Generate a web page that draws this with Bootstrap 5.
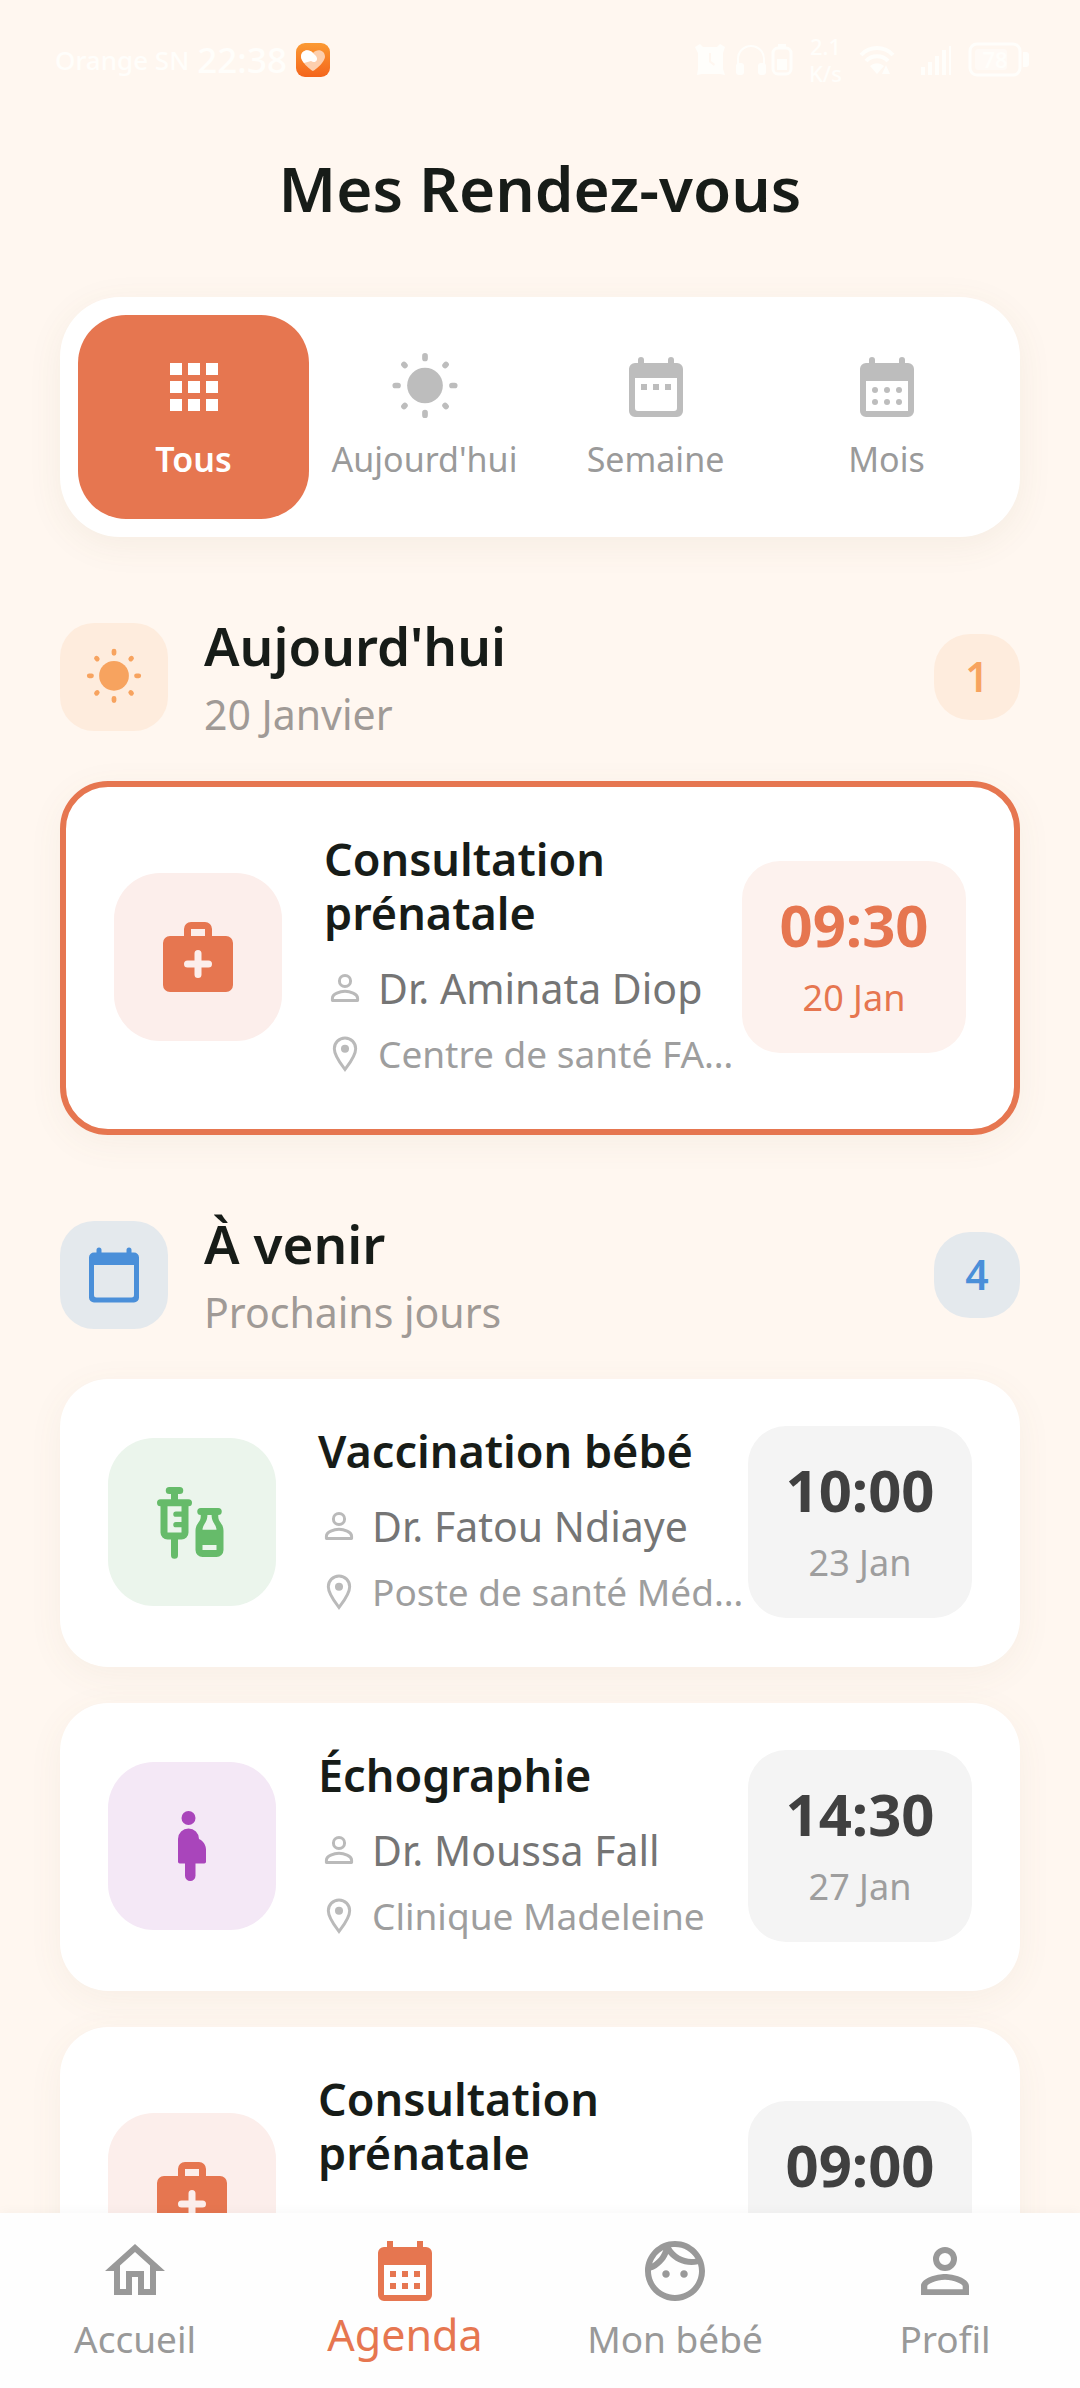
<!DOCTYPE html>
<html lang="fr">
<head>
<meta charset="utf-8">
<meta name="viewport" content="width=device-width, initial-scale=1">
<title>Mes Rendez-vous</title>
<link rel="stylesheet" href="https://cdn.jsdelivr.net/npm/bootstrap@5.3.0/dist/css/bootstrap.min.css">
<style>
:root{--accent:#e67650;--ink:#171c18;--muted:#9a9a9a;--page:#fff7f0}
body{background:var(--page);color:var(--ink);font-family:"Noto Sans",sans-serif}
svg{display:block;flex-shrink:0;fill:currentColor}
.scroller{overflow-y:auto;scrollbar-width:none}
.scroller::-webkit-scrollbar{display:none}

.statusbar{height:120px;padding:0 50px 0 55px;color:#fffefb;line-height:36px}
.carrier{font-size:26px;font-weight:500}
.clock{font-size:35px;font-weight:500}
.speed{font-size:22px;line-height:27px;font-weight:500}
.charge{font-size:22px;font-weight:600}
.page-title{font-size:62px;line-height:84px;font-weight:600;padding:26px 0 67px;margin:0}
.content{padding:0 60px 36px}

.filters{background:#fff;border-radius:60px;padding:18px;box-shadow:0 8px 36px rgba(120,100,60,.07)}
.filter{border:0;border-radius:48px;padding:36px 0;background:none;color:var(--muted);font-size:34px;line-height:48px}
.filter svg{color:#bdbdbd}
.filter.active,.filter.active svg{color:#fff}
.filter.active{background:var(--accent);font-weight:600}
.i72{width:72px;height:72px}
.i84{width:84px;height:84px}
.i60{width:60px;height:60px}
.i42{width:42px;height:42px;color:#bababa}

.section-head{padding:72px 0 36px;gap:36px}
.section-icon{width:108px;height:108px;border-radius:34px}
.section-name{font-size:53px;line-height:74px;font-weight:600;margin:0}
.section-note{font-size:41px;line-height:62px;color:#a09a96;margin:0}
.counter{width:86px;height:86px;border-radius:36px;font-size:41px;font-weight:600}
.tone-sun{background:#feecdd;color:#f7a35f}
.tone-blue{background:#e4e9ed;color:#4a8fd9}

.appointments{gap:36px}
.appointment{background:#fff;border-radius:48px;padding:45px 48px 48px;box-shadow:0 8px 36px rgba(120,100,60,.06)}
.appointment.is-today{border:6px solid var(--accent)}
.kind{width:168px;height:168px;border-radius:46px;margin-right:42px}
.kind-visit{background:#fceeeb;color:var(--accent)}
.kind-vaccine{background:#ebf5ec;color:#66bb6a}
.kind-scan{background:#f4e8f6;color:#a945bb}
.what{font-size:45px;line-height:54px;font-weight:600;margin:0 0 21px}
.who,.where{gap:12px;line-height:54px;min-height:54px;white-space:nowrap}
.who{font-size:41px;color:#757575;margin-bottom:12px}
.where{font-size:37px;color:#9e9e9e}
.slot{width:224px;border-radius:38px;padding:29px 0 31px;background:#f4f4f4;color:#9e9e9e}
.slot-time{font-size:58px;line-height:70px;font-weight:700;color:#404040;margin-bottom:14px}
.slot-day{font-size:36px;line-height:48px}
.is-today .slot{background:#fdf2ee;color:var(--accent)}
.is-today .slot-time{color:var(--accent)}

.tabs{background:#fefefe;padding:22px 0 17px;box-shadow:0 -2px 10px rgba(0,0,0,.03)}
.tab-link{color:#999;text-decoration:none;font-size:37px;line-height:64px;height:136px}
.tab-link.active{color:var(--accent);font-size:43px;line-height:56px}
</style>
<script src="https://cdn.jsdelivr.net/npm/bootstrap@5.3.0/dist/js/bootstrap.bundle.min.js"></script>
</head>
<body class="vh-100 d-flex flex-column overflow-hidden">

<svg class="d-none" aria-hidden="true">
  <symbol id="apps" viewBox="0 0 24 24"><path d="M4 4h4v4H4zM10 4h4v4h-4zM16 4h4v4h-4zM4 10h4v4H4zM10 10h4v4h-4zM16 10h4v4h-4zM4 16h4v4H4zM10 16h4v4h-4zM16 16h4v4h-4z"/></symbol>
  <symbol id="sun" viewBox="0 0 24 24"><circle cx="12" cy="11.5" r="5.95"/><path fill="none" stroke="currentColor" stroke-width="1.9" stroke-linecap="round" d="M12 1.6v.9M12 20.5v.9M2.1 11.5H3M21 11.5h.9M5 4.5l.3.3M19 4.5l-.3.3M5 18.5l.3-.3M19 18.5l-.3-.3"/></symbol>
  <symbol id="week" viewBox="0 0 24 24"><path fill-rule="evenodd" d="M6 4V3a1 1 0 0 1 2 0v1h8V3a1 1 0 0 1 2 0v1h1a2 2 0 0 1 2 2v14a2 2 0 0 1-2 2H5a2 2 0 0 1-2-2V6a2 2 0 0 1 2-2zM5 9v10a1 1 0 0 0 1 1h12a1 1 0 0 0 1-1V9z"/><path d="M7 11h2v2H7zM11 11h2v2h-2zM15 11h2v2h-2z"/></symbol>
  <symbol id="month" viewBox="0 0 24 24"><path fill-rule="evenodd" d="M6 4V3a1 1 0 0 1 2 0v1h8V3a1 1 0 0 1 2 0v1h1a2 2 0 0 1 2 2v14a2 2 0 0 1-2 2H5a2 2 0 0 1-2-2V6a2 2 0 0 1 2-2zM5 10v10h14V10z"/><circle cx="8" cy="13" r="1"/><circle cx="12" cy="13" r="1"/><circle cx="16" cy="13" r="1"/><circle cx="8" cy="17" r="1"/><circle cx="12" cy="17" r="1"/><circle cx="16" cy="17" r="1"/></symbol>
  <symbol id="day" viewBox="0 0 24 24"><path fill-rule="evenodd" d="M5 3V2a1 1 0 0 1 2 0v1h10V2a1 1 0 0 1 2 0v1h1a2 2 0 0 1 2 2v16a2 2 0 0 1-2 2H4a2 2 0 0 1-2-2V5a2 2 0 0 1 2-2zM4 8v12a1 1 0 0 0 1 1h14a1 1 0 0 0 1-1V8z"/></symbol>
  <symbol id="medkit" viewBox="0 0 24 24"><path fill-rule="evenodd" d="M8 6V4a2 2 0 0 1 2-2h4a2 2 0 0 1 2 2v2h4a2 2 0 0 1 2 2v12a2 2 0 0 1-2 2H4a2 2 0 0 1-2-2V8a2 2 0 0 1 2-2zM10 4v2h4V4zM11 13H9a1 1 0 0 0 0 2h2v2a1 1 0 0 0 2 0v-2h2a1 1 0 0 0 0-2h-2v-2a1 1 0 0 0-2 0z"/></symbol>
  <symbol id="vaccine" viewBox="0 0 24 24"><path fill-rule="evenodd" d="M5.500 2h3a1 1 0 0 1 0 2H8v1.500h3a1 1 0 0 1 0 2V15a2 2 0 0 1-2 2H8v4.500a1 1 0 0 1-2 0V17H5a2 2 0 0 1-2-2V7.500a1 1 0 0 1 0-2h3V4h-.5a1 1 0 0 1 0-2zM5 7.500V15h4v-1.500H7.400a.75.75 0 0 1 0-1.500H9v-1.500H7.400a.75.75 0 0 1 0-1.500H9V7.500z"/><path fill-rule="evenodd" d="M14.500 8h5a1 1 0 0 1 0 2v.4c0 1.600 1.500 2 1.500 4.100V20a2 2 0 0 1-2 2h-4a2 2 0 0 1-2-2v-5.500c0-2.100 1.500-2.500 1.500-4.100V10a1 1 0 0 1 0-2zM16.400 10c0 2.200-1.400 2.800-1.400 4.200h4c0-1.400-1.400-2-1.400-4.200zM15 18.600V20h4v-1.400z"/></symbol>
  <symbol id="pregnant" viewBox="0 0 24 24"><circle cx="11" cy="4" r="2"/><path d="M8 10a3 3 0 0 1 6 0c1.200.5 2 1.700 2 3v3.500a.5.5 0 0 1-.5.5H13v3.500a1.500 1.500 0 0 1-3 0V17H8.500a.5.500 0 0 1-.5-.5z"/></symbol>
  <symbol id="doctor" viewBox="0 0 24 24"><g fill="none" stroke="currentColor" stroke-width="1.7"><circle cx="12" cy="8" r="3.200"/><path stroke-linejoin="round" d="M4.800 19.200v-1.400c0-2.400 4.400-3.900 7.200-3.900s7.200 1.500 7.200 3.900v1.400z"/></g></symbol>
  <symbol id="pin" viewBox="0 0 24 24"><path fill="none" stroke="currentColor" stroke-width="1.700" d="M12 2.800A6.100 6.100 0 0 0 5.900 9c0 4.200 4 9 6.100 11.800C14.100 18 18.100 13.200 18.100 9A6.100 6.100 0 0 0 12 2.800z"/><circle cx="12" cy="9" r="2.300"/></symbol>
  <symbol id="home" viewBox="0 0 24 24"><path d="M12 5.690L17 10.190V18H15V12H9V18H7V10.190L12 5.690M12 3L2 12H5V20H11V14H13V20H19V12H22"/></symbol>
  <symbol id="agenda" viewBox="0 0 24 24"><path fill-rule="evenodd" d="M6 4V2h2v2h8V2h2v2h1a2 2 0 0 1 2 2v14a2 2 0 0 1-2 2H5a2 2 0 0 1-2-2V6a2 2 0 0 1 2-2zM5 10v10h14V10z"/><path d="M7 12h2v2H7zM11 12h2v2h-2zM15 12h2v2h-2zM7 16h2v2H7zM11 16h2v2h-2zM15 16h2v2h-2z"/></symbol>
  <symbol id="face" viewBox="0 0 24 24"><path d="M10.250 13c0 .69-.56 1.250-1.250 1.250S7.750 13.690 7.750 13s.56-1.250 1.250-1.250 1.250.56 1.250 1.250zM15 11.750c-.69 0-1.250.56-1.250 1.250s.56 1.250 1.250 1.250 1.250-.56 1.250-1.250-.56-1.250-1.250-1.250zm7 .25c0 5.520-4.480 10-10 10S2 17.520 2 12 6.480 2 12 2s10 4.480 10 10zM10.660 4.120C12.060 6.440 14.600 8 17.500 8c.46 0 .91-.05 1.340-.12C17.440 5.560 14.900 4 12 4c-.46 0-.91.05-1.340.12zM4.420 9.470c1.710-.97 3.030-2.550 3.660-4.440C6.370 6 5.050 7.580 4.420 9.470zM20 12c0-.78-.12-1.530-.33-2.240-.7.15-1.420.24-2.170.24-3.130 0-5.920-1.440-7.760-3.690C8.690 8.870 6.600 10.880 4 11.860c.01.04 0 .09 0 .14 0 4.420 3.580 8 8 8s8-3.580 8-8z"/></symbol>
  <symbol id="profile" viewBox="0 0 24 24"><path d="M12,4A4,4 0 0,1 16,8A4,4 0 0,1 12,12A4,4 0 0,1 8,8A4,4 0 0,1 12,4M12,6A2,2 0 0,0 10,8A2,2 0 0,0 12,10A2,2 0 0,0 14,8A2,2 0 0,0 12,6M12,13C14.670,13 20,14.330 20,17V20H4V17C4,14.330 9.330,13 12,13M12,14.900C9.030,14.900 6.100,16.360 6.100,17V18.100H17.900V17C17.900,16.360 14.970,14.900 12,14.900Z"/></symbol>
</svg>

<div class="scroller flex-grow-1">
  <header>
    <div class="statusbar d-flex align-items-center justify-content-between">
      <div class="d-flex align-items-center gap-2">
        <span class="carrier">Orange SN</span>
        <span class="clock">22:38</span>
        <svg width="36" height="36" viewBox="0 0 36 36">
          <defs><linearGradient id="heartbg" x1="0" y1="0" x2="0" y2="1"><stop offset="0" stop-color="#fb9a33"/><stop offset="1" stop-color="#f4651c"/></linearGradient></defs>
          <rect x="1" y="1" width="34" height="34" rx="9" fill="url(#heartbg)"/>
          <path fill="#fdcfae" d="M18 29c-1 0-12-8.500-12-14.500C6 8 14 6 18 11c4-5 12-3 12 3.500C30 20.500 19 29 18 29z"/>
          <path fill="#fff" d="M6 14.500C6 8 14 6 18 11l3 3c3 4-1 8-5 5l-7 2c-2-2.500-3-4.700-3-6.500z"/>
        </svg>
      </div>
      <div class="d-flex align-items-center">
        <svg width="34" height="34" viewBox="0 0 34 34"><path fill-rule="evenodd" d="M2 4l5-3 3 3h14l3-3 5 3-2 6v16l2 6-5-1H9l-5 1 1-6V10zM16 10v9l5 4 1-2-4-3v-8z"/></svg>
        <svg class="ms-2" width="32" height="34" viewBox="0 0 32 34"><path fill="none" stroke="currentColor" stroke-width="2" d="M3 24v-8a13 13 0 0 1 26 0v8"/><rect x="1" y="20" width="8" height="12" rx="3"/><rect x="23" y="20" width="8" height="12" rx="3"/></svg>
        <svg class="ms-1 me-3" width="22" height="34" viewBox="0 0 22 34"><rect x="2" y="5" width="18" height="26" rx="5" fill="none" stroke="currentColor" stroke-width="3"/><path d="M7 1h8v4H7zM6 16h10v11H6z"/></svg>
        <span class="speed d-flex flex-column text-center"><span>2.1</span><span>K/s</span></span>
        <svg class="ms-3" width="38" height="34" viewBox="0 0 38 34"><path fill="none" stroke="currentColor" stroke-width="4" d="M3 12a22 22 0 0 1 32 0M8 18a15 15 0 0 1 22 0"/><path d="M12 23a10 10 0 0 1 14 0l-7 8zM28 22l4 9h-8z"/></svg>
        <svg class="ms-4" width="32" height="34" viewBox="0 0 32 34"><path d="M1 24h4v8H1zM8 19h4v13H8zM15 13h4v19h-4zM22 7h4v25h-4zM29 3h2v29h-2z"/></svg>
        <svg class="ms-3" width="62" height="36" viewBox="0 0 62 36"><rect x="2" y="2" width="50" height="31" rx="7" fill="none" stroke="currentColor" stroke-width="3"/><rect x="7" y="7" width="32" height="21" rx="3" fill-opacity=".5"/><text class="charge" x="27" y="26" text-anchor="middle">78</text><path d="M55 10h3a3 3 0 0 1 3 3v9a3 3 0 0 1-3 3h-3z"/></svg>
      </div>
    </div>
    <h1 class="page-title text-center">Mes Rendez-vous</h1>
  </header>

  <main class="content">
    <div class="filters d-flex">
      <button type="button" class="filter active col d-flex flex-column align-items-center"><svg class="i72"><use href="#apps"/></svg><span class="pt-2 mt-1">Tous</span></button>
      <button type="button" class="filter col d-flex flex-column align-items-center"><svg class="i72"><use href="#sun"/></svg><span class="pt-2 mt-1">Aujourd'hui</span></button>
      <button type="button" class="filter col d-flex flex-column align-items-center"><svg class="i72"><use href="#week"/></svg><span class="pt-2 mt-1">Semaine</span></button>
      <button type="button" class="filter col d-flex flex-column align-items-center"><svg class="i72"><use href="#month"/></svg><span class="pt-2 mt-1">Mois</span></button>
    </div>

    <section>
      <div class="section-head d-flex align-items-center">
        <div class="section-icon tone-sun d-flex align-items-center justify-content-center"><svg class="i60"><use href="#sun"/></svg></div>
        <div class="flex-grow-1"><h2 class="section-name">Aujourd'hui</h2><p class="section-note">20 Janvier</p></div>
        <span class="counter tone-sun d-flex align-items-center justify-content-center">1</span>
      </div>
      <div class="appointments d-flex flex-column">
        <article class="appointment is-today d-flex align-items-center">
          <div class="kind kind-visit d-flex align-items-center justify-content-center flex-shrink-0"><svg class="i84"><use href="#medkit"/></svg></div>
          <div class="col">
            <h3 class="what">Consultation prénatale</h3>
            <div class="who d-flex align-items-center"><svg class="i42"><use href="#doctor"/></svg>Dr. Aminata Diop</div>
            <div class="where d-flex align-items-center"><svg class="i42"><use href="#pin"/></svg>Centre de santé FA…</div>
          </div>
          <div class="slot text-center flex-shrink-0"><div class="slot-time">09:30</div><div class="slot-day">20 Jan</div></div>
        </article>
      </div>
    </section>

    <section>
      <div class="section-head d-flex align-items-center">
        <div class="section-icon tone-blue d-flex align-items-center justify-content-center"><svg class="i60"><use href="#day"/></svg></div>
        <div class="flex-grow-1"><h2 class="section-name">À venir</h2><p class="section-note">Prochains jours</p></div>
        <span class="counter tone-blue d-flex align-items-center justify-content-center">4</span>
      </div>
      <div class="appointments d-flex flex-column">
        <article class="appointment d-flex align-items-center">
          <div class="kind kind-vaccine d-flex align-items-center justify-content-center flex-shrink-0"><svg class="i84"><use href="#vaccine"/></svg></div>
          <div class="col">
            <h3 class="what">Vaccination bébé</h3>
            <div class="who d-flex align-items-center"><svg class="i42"><use href="#doctor"/></svg>Dr. Fatou Ndiaye</div>
            <div class="where d-flex align-items-center"><svg class="i42"><use href="#pin"/></svg>Poste de santé Méd…</div>
          </div>
          <div class="slot text-center flex-shrink-0"><div class="slot-time">10:00</div><div class="slot-day">23 Jan</div></div>
        </article>
        <article class="appointment d-flex align-items-center">
          <div class="kind kind-scan d-flex align-items-center justify-content-center flex-shrink-0"><svg class="i84"><use href="#pregnant"/></svg></div>
          <div class="col">
            <h3 class="what">Échographie</h3>
            <div class="who d-flex align-items-center"><svg class="i42"><use href="#doctor"/></svg>Dr. Moussa Fall</div>
            <div class="where d-flex align-items-center"><svg class="i42"><use href="#pin"/></svg>Clinique Madeleine</div>
          </div>
          <div class="slot text-center flex-shrink-0"><div class="slot-time">14:30</div><div class="slot-day">27 Jan</div></div>
        </article>
        <article class="appointment d-flex align-items-center">
          <div class="kind kind-visit d-flex align-items-center justify-content-center flex-shrink-0"><svg class="i84"><use href="#medkit"/></svg></div>
          <div class="col">
            <h3 class="what">Consultation prénatale</h3>
            <div class="who invisible d-flex align-items-center"><svg class="i42"><use href="#doctor"/></svg></div>
            <div class="where invisible d-flex align-items-center"><svg class="i42"><use href="#pin"/></svg></div>
          </div>
          <div class="slot text-center flex-shrink-0"><div class="slot-time">09:00</div><div class="slot-day">&nbsp;</div></div>
        </article>
      </div>
    </section>
  </main>
</div>

<nav class="tabs d-flex flex-shrink-0 position-relative">
  <a href="#" class="tab-link col d-flex flex-column align-items-center"><svg class="i72"><use href="#home"/></svg>Accueil</a>
  <a href="#" class="tab-link active col d-flex flex-column align-items-center" aria-current="page"><svg class="i72"><use href="#agenda"/></svg>Agenda</a>
  <a href="#" class="tab-link col d-flex flex-column align-items-center"><svg class="i72"><use href="#face"/></svg>Mon bébé</a>
  <a href="#" class="tab-link col d-flex flex-column align-items-center"><svg class="i72"><use href="#profile"/></svg>Profil</a>
</nav>
</body>
</html>
